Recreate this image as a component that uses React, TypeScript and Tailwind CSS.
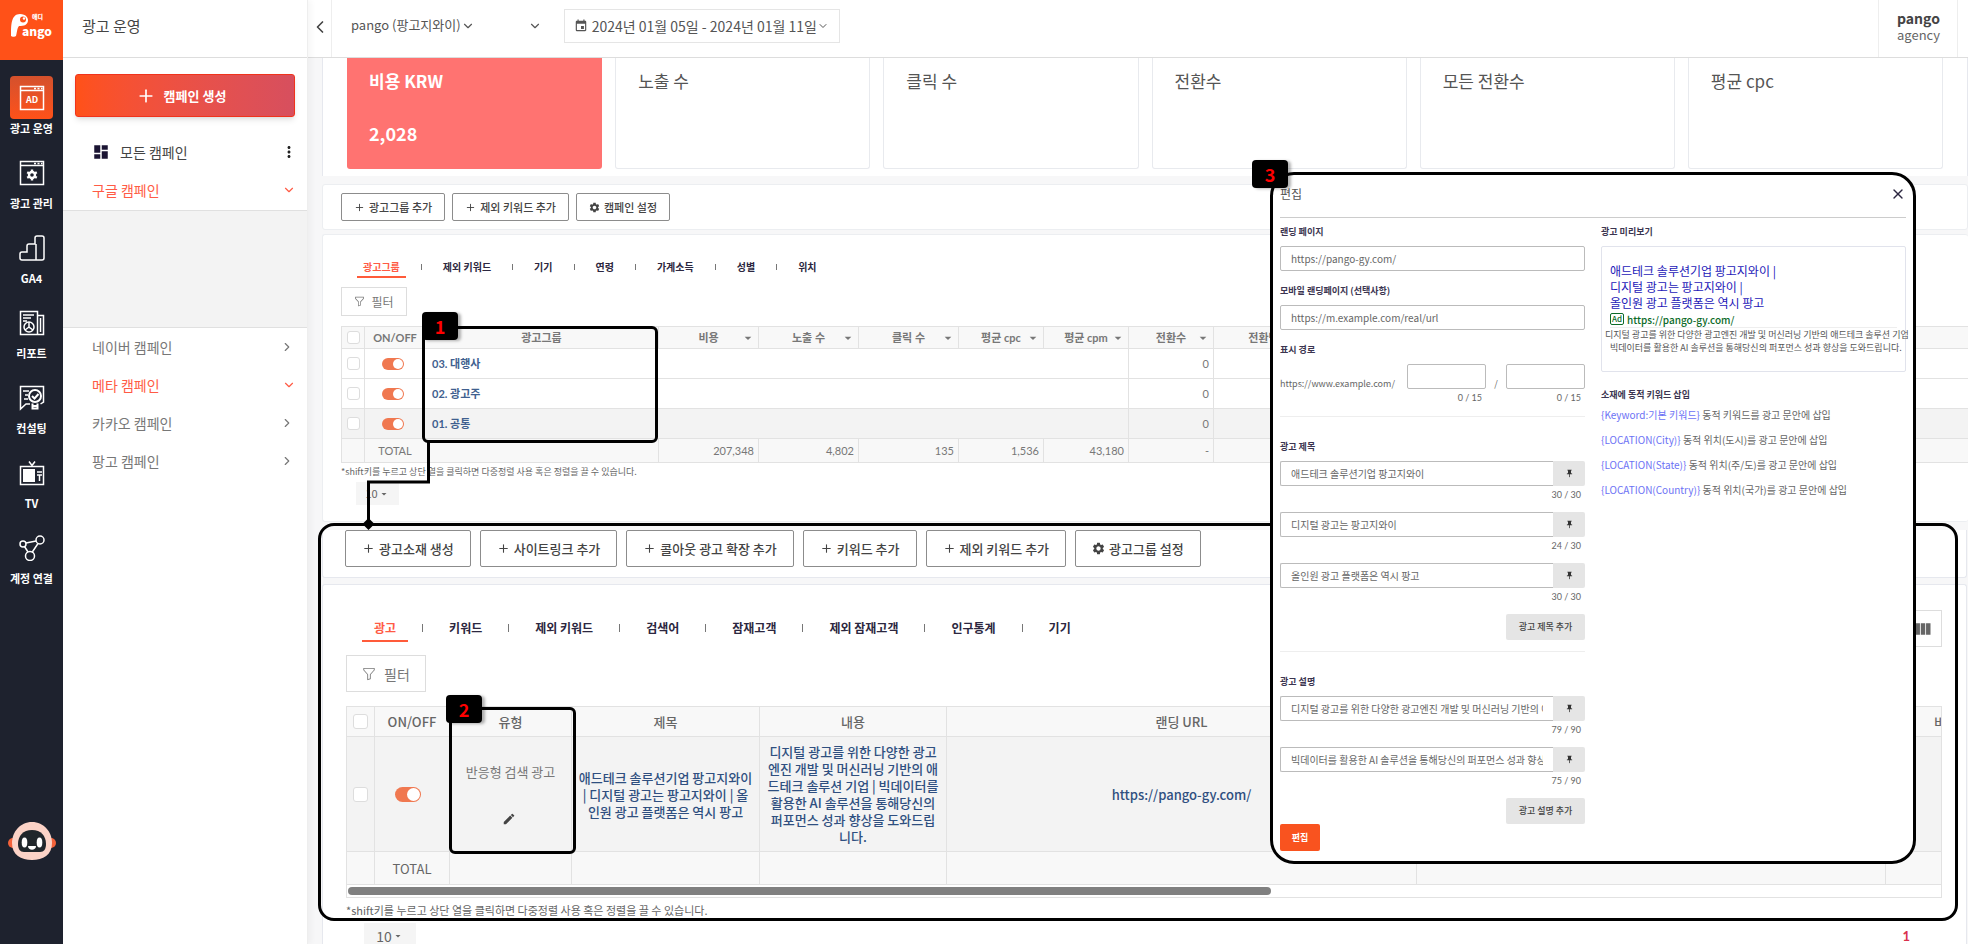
import type { ReactNode } from "react";
import clsx from "clsx";
import { ChevronDown, ChevronLeft, ChevronRight, Plus, X } from "lucide-react";
import { BsFunnel } from "react-icons/bs";
import {
  MdArrowDropDown,
  MdDashboard,
  MdEdit,
  MdEvent,
  MdMoreVert,
  MdPushPin,
  MdSettings,
  MdViewColumn,
} from "react-icons/md";

/* ---------- Rail ---------- */

function RailSvg({ children }: { children: ReactNode }) {
  return (
    <svg viewBox="0 0 26 26" className="size-[26px]" fill="none" stroke="#fff" strokeWidth="1.5">
      {children}
    </svg>
  );
}

function WindowFrame() {
  return (
    <>
      <rect x="1.5" y="1.5" width="23" height="23" />
      <path d="M1.5 5.5h23M15 3.5h2M18.5 3.5h2M22 3.5h1.5" />
    </>
  );
}

const railItems = [
  {
    label: "광고 운영",
    active: true,
    icon: (
      <RailSvg>
        <WindowFrame />
        <text x="13" y="18" textAnchor="middle" fontSize="9" fontWeight="700" fill="#fff" stroke="none">
          AD
        </text>
      </RailSvg>
    ),
  },
  {
    label: "광고 관리",
    icon: (
      <RailSvg>
        <WindowFrame />
        <circle cx="13" cy="15" r="3" strokeWidth="2.4" />
        <path
          d="M13 9.5v2M13 18.5v2M8.2 12.2l1.8 1M16 16.8l1.8 1M8.2 17.8l1.8-1M16 13.2l1.8-1"
          strokeWidth="2.4"
        />
      </RailSvg>
    ),
  },
  {
    label: "GA4",
    icon: (
      <RailSvg>
        <path d="M17 25H3a2 2 0 0 1-2-2v-4a2 2 0 0 1 2-2h5v-6a2 2 0 0 1 2-2h6V3a2 2 0 0 1 2-2h5a2 2 0 0 1 2 2v20a2 2 0 0 1-2 2h-6V9" />
      </RailSvg>
    ),
  },
  {
    label: "리포트",
    icon: (
      <RailSvg>
        <path d="M1.5 1.5h17v23h-17zM18.5 5.5h6v19h-6M21.5 8v14M4 5h11M4 8h8M4 11h4" />
        <circle cx="10" cy="17" r="5" />
        <path d="M10 12v5l4 3M10 17l-4 3" />
      </RailSvg>
    ),
  },
  {
    label: "컨설팅",
    icon: (
      <RailSvg>
        <path d="M11 19H7l-5.5 5V1.5h23V17l-3 2M4 6h6M6 10h3M5 14h4" />
        <circle cx="16" cy="11" r="6" strokeWidth="2" />
        <path d="m13 11 2.5 2.5 4-4.5M13.5 18.5v5h5v-5M13.5 21h5" strokeWidth="2" />
      </RailSvg>
    ),
  },
  {
    label: "TV",
    icon: (
      <RailSvg>
        <rect x="1.5" y="6.5" width="23" height="18" />
        <rect x="4" y="9" width="12" height="13" fill="#fff" stroke="none" />
        <path d="M18 12h5M18 15h5M20.5 15v6M10 1.5l3 4 3-4" />
      </RailSvg>
    ),
  },
  {
    label: "계정 연결",
    icon: (
      <RailSvg>
        <circle cx="4" cy="9" r="3" />
        <circle cx="21" cy="5" r="4" />
        <circle cx="11" cy="21" r="4.5" />
        <path d="m7 8 10-2M5.5 11.5l3.5 5.5M19 8.5l-6 9" />
      </RailSvg>
    ),
  },
];

function Logo() {
  return (
    <div className="flex h-[60px] items-center justify-center bg-[#ff5118] pb-2">
      <svg viewBox="0 0 44 28" className="h-7 w-11" fill="#fff" role="img" aria-label="Pango">
        {/* Elephant head with its trunk hanging down */}
        <path d="M1 24C1 13 1 2 10 2c6 0 8 4 8 6 0 5-4 6-9 6-2 2-2 7-3 10-1 1-4 1-5 0z" />
        <circle cx="13" cy="7.5" r="3" fill="#ff5118" />
        <circle cx="14" cy="6.5" r="1.2" />
        <text x="12" y="24" fontSize="12" fontWeight="900">
          ango
        </text>
        <text x="22" y="7" fontSize="6" fontWeight="900">
          애디
        </text>
      </svg>
    </div>
  );
}

function Rail() {
  return (
    <nav className="flex w-[63px] shrink-0 flex-col bg-[#1e222e]">
      <Logo />
      <ul className="mt-4">
        {railItems.map(({ label, icon, active }) => (
          <li key={label} className="h-[75px]">
            <a href="#" className="flex flex-col items-center text-[11px] leading-4 font-bold text-white">
              <span
                className={clsx(
                  "flex size-[43px] items-center justify-center rounded-sm",
                  active && "bg-linear-to-b from-[#d4512c] to-[#ff5118]",
                )}
              >
                {icon}
              </span>
              <span className="mt-px whitespace-nowrap">{label}</span>
            </a>
          </li>
        ))}
      </ul>
      <button className="mt-auto mb-[84px] self-center" aria-label="챗봇">
        <svg viewBox="0 0 48 38" className="h-[38px] w-12">
          <circle cx="5" cy="21" r="5" fill="#f4623a" />
          <circle cx="43" cy="21" r="5" fill="#f4623a" />
          <path d="M24 0c12 0 20 10 20 21 0 12-9 17-20 17S4 33 4 21C4 10 12 0 24 0z" fill="#fcd3c7" />
          <path d="M24 8c9 0 14 6 14 14 0 5-2 8-6 8H16c-4 0-6-3-6-8 0-8 5-14 14-14z" fill="#20262b" />
          <ellipse cx="16.5" cy="20.5" rx="2.8" ry="5" fill="#fff" />
          <ellipse cx="31.5" cy="20.5" rx="2.8" ry="5" fill="#fff" />
          <path d="M20 24h8c0 5-8 5-8 0z" fill="#fff" />
        </svg>
      </button>
    </nav>
  );
}

/* ---------- Campaign panel ---------- */

function CampaignLink({ label, open }: { label: string; open?: boolean }) {
  return (
    <a
      href="#"
      className={clsx(
        "flex h-[38px] items-center justify-between pr-[11px] pl-[29px] text-sm",
        open ? "text-[#ff5b45]" : "text-[#777]",
      )}
    >
      {label}
      {open ? <ChevronDown className="size-[14px]" /> : <ChevronRight className="mr-[2px] size-[14px]" />}
    </a>
  );
}

function CampaignPanel() {
  return (
    <aside className="z-10 flex w-[245px] shrink-0 flex-col border-r border-[#eee] bg-white shadow-[3px_0_6px_rgba(0,0,0,0.04)]">
      <h1 className="flex h-[58px] items-center border-b border-[#ddd] pb-1 pl-[19px] text-[15px] text-[#444]">
        광고 운영
      </h1>
      <button className="mx-3 mt-4 flex h-[43px] items-center justify-center gap-2 rounded-[3px] border border-[#f0331c] bg-linear-to-r from-[#ff5118] to-[#d74f5e] pr-2 text-[13px] font-bold text-white shadow-md">
        <Plus className="size-5" />
        캠페인 생성
      </button>
      <div className="mt-4 flex h-[38px] items-center pr-[9px] pl-[29px] text-sm text-[#444]">
        <MdDashboard className="mr-[10px] size-[18px] text-[#1b1433]" />
        <a href="#">모든 캠페인</a>
        <button className="ml-auto" aria-label="더보기">
          <MdMoreVert className="size-[18px] text-[#222]" />
        </button>
      </div>
      <CampaignLink label="구글 캠페인" open />
      <div className="mt-px h-[118px] border-y border-[#e0e0e0] bg-[#f3f3f3]" />
      <CampaignLink label="네이버 캠페인" />
      <CampaignLink label="메타 캠페인" open />
      <CampaignLink label="카카오 캠페인" />
      <CampaignLink label="팡고 캠페인" />
    </aside>
  );
}

/* ---------- Shared controls ---------- */

function Switch({ large, label }: { large?: boolean; label: string }) {
  return (
    <input
      type="checkbox"
      role="switch"
      defaultChecked
      aria-label={label}
      className={clsx(
        "mx-auto flex appearance-none items-center justify-end rounded-full bg-[#f07850] p-px before:rounded-full before:bg-white before:content-['']",
        large ? "h-[15px] w-[26px] before:size-[13px]" : "h-3 w-[22px] before:size-[10px]",
      )}
    />
  );
}

function Tick({ large, label }: { large?: boolean; label: string }) {
  return (
    <input
      type="checkbox"
      aria-label={label}
      className={clsx(
        "mx-auto block appearance-none rounded-[3px] border border-[#ddd] bg-white",
        large ? "size-[15px]" : "size-[13px]",
      )}
    />
  );
}

function ActionButton({ label, large, gear }: { label: string; large?: boolean; gear?: boolean }) {
  const Icon = gear ? MdSettings : Plus;
  return (
    <button
      className={clsx(
        "flex items-center rounded-[2px] border border-[#8c8c8c] bg-white font-medium whitespace-nowrap text-[#444]",
        large ? "h-[37px] gap-1 px-4 text-[13px]" : "h-7 gap-1 px-3 text-[11px]",
      )}
    >
      <Icon
        className={clsx(large ? "size-[13px]" : "size-[11px]", gear && "scale-110")}
        strokeWidth={gear ? 0 : 2}
      />
      {label}
    </button>
  );
}

function Tabs({ items, large }: { items: string[]; large?: boolean }) {
  return (
    <div role="tablist" className={clsx("ml-4 flex items-start", large ? "gap-[14px]" : "gap-[15px]")}>
      {items.map((item, i) => (
        <div key={item} className={clsx("flex", large ? "gap-[14px]" : "gap-[15px]")}>
          {i > 0 && <span className={clsx("w-px bg-[#777]", large ? "mt-[6px] h-2" : "mt-[7px] h-[6px]")} />}
          <button
            role="tab"
            aria-selected={i === 0}
            className={clsx(
              "border-b-2 font-bold whitespace-nowrap",
              large ? "h-6 px-3 pb-[2px] text-xs leading-5" : "h-[21px] px-[6px] text-[10px] leading-[19px]",
              i === 0 ? "border-[#ff5b3a] text-[#ff5b45]" : "border-transparent text-[#2c2740]",
            )}
          >
            {item}
          </button>
        </div>
      ))}
    </div>
  );
}

function FilterButton({ large }: { large?: boolean }) {
  return (
    <button
      className={clsx(
        "flex items-center justify-center border border-[#ddd] text-[#777]",
        large ? "mt-2 h-[37px] w-20 gap-2 text-sm" : "mt-[9px] h-[29px] w-[66px] gap-[6px] text-xs",
      )}
    >
      <BsFunnel className={large ? "size-[14px]" : "size-[11px]"} />
      필터
    </button>
  );
}

function PageSize({ large }: { large?: boolean }) {
  return (
    <label
      className={clsx(
        "flex items-center justify-center bg-[#f5f5f5] text-[#666]",
        large ? "mt-px ml-[18px] h-[26px] w-[52px] text-sm" : "mt-px ml-[15px] h-[23px] w-[43px] text-[11px]",
      )}
    >
      <select aria-label="페이지당 행 수" className="field-sizing-content appearance-none">
        <option>10</option>
      </select>
      <MdArrowDropDown className="size-3" />
    </label>
  );
}

function Badge({ n, className }: { n: number; className: string }) {
  return (
    <span
      className={clsx(
        "absolute z-10 flex h-7 w-9 items-center justify-center rounded-[4px] bg-black pb-px text-lg font-bold text-[#f00] shadow-[3px_1px_3px_rgba(0,0,0,0.3)]",
        className,
      )}
    >
      {n}
    </span>
  );
}

/* ---------- Top bar and summary ---------- */

function TopBar() {
  return (
    <header className="flex h-[58px] shrink-0 border-b border-[#ddd] bg-white text-sm text-[#555]">
      <button className="flex w-6 items-center justify-center border-r border-[#eee] pb-1" aria-label="접기">
        <ChevronLeft className="size-5 text-[#444]" />
      </button>
      <label className="ml-[19px] flex items-center pb-[6px]">
        <select aria-label="광고주" className="field-sizing-content appearance-none text-[13px]">
          <option>pango (팡고지와이)</option>
        </select>
        <ChevronDown className="size-[14px]" />
      </label>
      <label className="ml-[45px] flex items-center pb-[6px]">
        <select aria-label="계정" className="w-2 appearance-none">
          <option></option>
        </select>
        <ChevronDown className="size-[14px]" />
      </label>
      <button className="mt-[9px] ml-[22px] flex h-[34px] items-center border border-[#e5e5e5] pr-[10px] pl-[9px]">
        <MdEvent className="mr-1 size-[14px]" />
        2024년 01월 05일 - 2024년 01월 11일
        <ChevronDown className="size-3" />
      </button>
      <div className="mr-[10px] ml-auto flex w-20 flex-col border-x border-[#eee] pt-2 pl-[18px] text-[#444]">
        <strong className="text-sm leading-5">pango</strong>
        <span className="text-[13px] leading-[14px] text-[#666]">agency</span>
      </div>
    </header>
  );
}

const metrics = [
  { name: "비용 KRW", value: "2,028" },
  { name: "노출 수" },
  { name: "클릭 수" },
  { name: "전환수" },
  { name: "모든 전환수" },
  { name: "평균 cpc" },
];

function Summary() {
  return (
    <section className="grid h-[118px] shrink-0 grid-cols-6 gap-x-[13px] border-x border-[#e6e8ee] bg-white px-6 pb-[7px]">
      {metrics.map(({ name, value }) => (
        <div
          key={name}
          className={clsx(
            "rounded-b-[3px] px-[22px] pt-[11px] text-[17px] leading-6",
            value ? "bg-[#ff7371] font-bold text-white" : "border-x border-b border-[#e8eaee] text-[#555]",
          )}
        >
          <h2>{name}</h2>
          {value && <p className="mt-7 text-lg leading-6">{value}</p>}
        </div>
      ))}
    </section>
  );
}

/* ---------- Ad group table ---------- */

const groupColumns = [
  { name: "비용", total: "207,348" },
  { name: "노출 수", total: "4,802" },
  { name: "클릭 수", total: "135" },
  { name: "평균 cpc", total: "1,536" },
  { name: "평균 cpm", total: "43,180" },
  { name: "전환수", total: "-" },
  { name: "전환당 비용", total: "" },
];

const groups = ["03. 대행사", "02. 광고주", "01. 공통"];

const line = "border-r border-b border-[#e2e2e2]";

function AdGroupTable() {
  return (
    <div className="relative mt-[10px]">
      <table className="w-full table-fixed border-separate border-spacing-0 border-t border-l border-[#e2e2e2] font-['Lato','Noto_Sans_CJK_KR',sans-serif] text-[11px] leading-4 text-[#777]">
        <colgroup>
          <col className="w-[23px]" />
          <col className="w-[60px]" />
          <col className="w-[234px]" />
          <col className="w-[100px]" />
          <col className="w-[100px]" />
          <col className="w-[100px]" />
          <col className="w-[85px]" />
          <col className="w-[85px]" />
          <col className="w-[85px]" />
          <col className="w-[123px]" />
          <col />
        </colgroup>
        <thead>
          <tr className="h-[22px] bg-[#f8f8f8]">
            <th className={line}>
              <Tick label="전체 선택" />
            </th>
            <th className="border-b border-[#e2e2e2]">ON/OFF</th>
            <th className={line}>광고그룹</th>
            {groupColumns.map(({ name }) => (
              <th key={name} className={line}>
                <button className="grid w-full grid-cols-[18px_1fr_18px] items-center whitespace-nowrap">
                  <span />
                  {name}
                  <MdArrowDropDown className="size-4" />
                </button>
              </th>
            ))}
            <th className="border-b border-[#e2e2e2]" />
          </tr>
        </thead>
        <tbody>
          {groups.map((group, row) => (
            <tr key={group} className={clsx("h-[30px]", row === 2 ? "bg-[#f3f3f3]" : "bg-white")}>
              <td className={line}>
                <Tick label={`${group} 선택`} />
              </td>
              <td className="border-b border-[#e2e2e2] pr-1">
                <Switch label={group} />
              </td>
              <td className="border-b border-[#e2e2e2] pl-[7px] font-bold text-[#3f5f8f]">
                <a href="#">{group}</a>
              </td>
              {groupColumns.map(({ name }, i) => (
                <td
                  key={name}
                  className={clsx(
                    "border-b border-[#e2e2e2] text-right",
                    i > 3 && i < 6 && "border-r",
                    i === 5 && "pr-1",
                  )}
                >
                  {i === 5 && "0"}
                </td>
              ))}
              <td className="border-b border-[#e2e2e2]" />
            </tr>
          ))}
        </tbody>
        <tfoot>
          <tr className="h-6 bg-[#f8f8f8]">
            <td className={line} />
            <td className="border-b border-[#e2e2e2] text-center">TOTAL</td>
            <td className={line} />
            {groupColumns.map(({ name, total }) => (
              <td key={name} className={clsx(line, "pr-1 text-right")}>
                {total}
              </td>
            ))}
            <td className="border-b border-[#e2e2e2]" />
          </tr>
        </tfoot>
      </table>

      {/* Callout 1 and the line that leads to the ad section */}
      <div className="pointer-events-none absolute top-0 left-[81px] h-[117px] w-[236px] rounded-md border-3 border-black" />
      <Badge n={1} className="-top-[14px] left-[81px]" />
      <svg viewBox="0 0 70 90" className="pointer-events-none absolute top-[116px] left-5 z-10 h-[90px] w-[70px]">
        <path d="M67.5 0v40H7.5v41" fill="none" stroke="#000" strokeWidth="3" />
        <path d="m7.5 76 6 6-6 6-6-6z" />
      </svg>
    </div>
  );
}

function HelpText({ large }: { large?: boolean }) {
  return (
    <p className={clsx("text-[#666]", large ? "text-[11px] leading-6" : "text-[9px] leading-[18px]")}>
      *shift키를 누르고 상단 열을 클릭하면 다중정렬 사용 혹은 정렬을 끌 수 있습니다.
    </p>
  );
}

/* ---------- Ad table ---------- */

const adTitle = "애드테크 솔루션기업 팡고지와이\n| 디지털 광고는 팡고지와이 | 올\n인원 광고 플랫폼은 역시 팡고";
const adBody =
  "디지털 광고를 위한 다양한 광고\n엔진 개발 및 머신러닝 기반의 애\n드테크 솔루션 기업 | 빅데이터를\n활용한 AI 솔루션을 통해당신의\n퍼포먼스 성과 향상을 도와드립\n니다.";

function AdTable() {
  return (
    <div className="relative mt-[14px]">
      <div className="overflow-hidden border border-[#e2e2e2]">
        <table className="w-[1660px] table-fixed border-separate border-spacing-0 text-center text-[13px] leading-[17px] text-[#666]">
          <colgroup>
            <col className="w-7" />
            <col className="w-[75px]" />
            <col className="w-[122px]" />
            <col className="w-[188px]" />
            <col className="w-[187px]" />
            <col className="w-[470px]" />
            <col className="w-[469px]" />
            <col className="w-[121px]" />
          </colgroup>
          <thead>
            <tr className="h-[30px] bg-[#f8f8f8]">
              <th className={line}>
                <Tick large label="전체 선택" />
              </th>
              {["ON/OFF", "유형", "제목", "내용", "랜딩 URL", "", "비용"].map((name) => (
                <th key={name} className={clsx(line, "font-medium")}>
                  {name}
                </th>
              ))}
            </tr>
          </thead>
          <tbody>
            <tr className="h-[115px] bg-[#f3f3f3]">
              <td className={line}>
                <Tick large label="광고 선택" />
              </td>
              <td className={clsx(line, "pr-2")}>
                <Switch large label="광고" />
              </td>
              <td className={clsx(line, "text-[#777]")}>
                <p>반응형 검색 광고</p>
                <button className="mt-8 mr-1 align-top" aria-label="수정">
                  <MdEdit className="size-[14px] text-[#444]" />
                </button>
              </td>
              <td className={clsx(line, "font-medium whitespace-pre text-[#2f4f80]")}>{adTitle}</td>
              <td className={clsx(line, "font-medium whitespace-pre text-[#2f4f80]")}>{adBody}</td>
              <td className={clsx(line, "font-medium text-[#2f4f80]")}>
                <a href="#">https://pango-gy.com/</a>
              </td>
              <td className={line} />
              <td className={line} />
            </tr>
          </tbody>
          <tfoot>
            <tr className="h-[33px] bg-[#f8f8f8]">
              <td className={line} />
              <td className={line}>TOTAL</td>
              <td className={line} />
              <td className={line} />
              <td className={line} />
              <td className={line} />
              <td className={line} />
              <td className={line} />
            </tr>
          </tfoot>
        </table>
        <div className="px-px py-[2px]">
          <div className="h-2 w-[58%] rounded-full bg-[#808080]" />
        </div>
      </div>

      {/* Callout 2 */}
      <div className="pointer-events-none absolute top-px left-[103px] h-[147px] w-[127px] rounded-md border-3 border-black" />
      <Badge n={2} className="-top-[11px] left-[100px]" />
    </div>
  );
}

/* ---------- Edit dialog ---------- */

const input =
  "h-[25px] w-full min-w-0 rounded-[2px] border border-[#bbb] bg-white px-[10px] text-[10px] text-[#666] outline-none";

function Counter({ children }: { children: ReactNode }) {
  return <p className="mt-px pr-1 text-right font-['Lato',sans-serif] leading-4 text-[#666]">{children}</p>;
}

function PinnedField({ label, value, count }: { label: string; value: string; count: string }) {
  return (
    <div className="mb-[9px]">
      <div className="flex">
        <input aria-label={label} className={clsx(input, "rounded-r-none border-r-0")} defaultValue={value} />
        <button
          type="button"
          className="flex w-8 shrink-0 items-center justify-center rounded-r-[2px] bg-[#e5e5e5]"
          aria-label="고정"
        >
          <MdPushPin className="size-[9px] text-[#333]" />
        </button>
      </div>
      <Counter>{count}</Counter>
    </div>
  );
}

const fieldLabel = "mb-[6px] block leading-4 font-bold text-[#3b3550]";
const addButton = "ml-auto block h-[26px] w-[79px] rounded-[2px] bg-[#e5e5e5] font-medium text-[#444]";

const dynamicKeywords = [
  ["{Keyword:기본 키워드}", "동적 키워드를 광고 문안에 삽입"],
  ["{LOCATION(City)}", "동적 위치(도시)를 광고 문안에 삽입"],
  ["{LOCATION(State)}", "동적 위치(주/도)를 광고 문안에 삽입"],
  ["{LOCATION(Country)}", "동적 위치(국가)를 광고 문안에 삽입"],
];

function EditDialog() {
  return (
    <div className="absolute top-[172px] right-[52px] z-20">
      <Badge n={3} className="-top-3 -left-[18px]" />
      <form
        role="dialog"
        aria-label="편집"
        className="w-[646px] rounded-[24px] border-3 border-black bg-white px-[7px] pb-[10px] text-[9px]"
        onSubmit={(e) => e.preventDefault()}
      >
        <div className="flex h-[43px] items-center justify-between border-b border-[#ccc] pb-1 text-xs text-[#555]">
          <h2>편집</h2>
          <button type="button" aria-label="닫기">
            <X className="size-4 text-[#2c2740]" />
          </button>
        </div>

        <div className="grid grid-cols-2 gap-4 pt-[6px]">
          <div>
            <label className={fieldLabel} htmlFor="landing">
              랜딩 페이지
            </label>
            <input id="landing" className={input} defaultValue="https://pango-gy.com/" />
            <label className={clsx(fieldLabel, "mt-3")} htmlFor="mobile">
              모바일 랜딩페이지 (선택사항)
            </label>
            <input id="mobile" className={input} defaultValue="https://m.example.com/real/url" />
            <label className={clsx(fieldLabel, "mt-3")} htmlFor="path">
              표시 경로
            </label>
            <div className="grid grid-cols-[1fr_79px_20px_79px] text-[#666]">
              <span className="pt-3 leading-4">https://www.example.com/</span>
              <div>
                <input id="path" className={input} />
                <Counter>0 / 15</Counter>
              </div>
              <span className="pt-3 text-center leading-4">/</span>
              <div>
                <input aria-label="표시 경로 2" className={input} />
                <Counter>0 / 15</Counter>
              </div>
            </div>

            <h3 className={clsx(fieldLabel, "mt-[10px] border-t border-[#eee] pt-[22px]")}>광고 제목</h3>
            <PinnedField label="광고 제목 1" value="애드테크 솔루션기업 팡고지와이" count="30 / 30" />
            <PinnedField label="광고 제목 2" value="디지털 광고는 팡고지와이" count="24 / 30" />
            <PinnedField label="광고 제목 3" value="올인원 광고 플랫폼은 역시 팡고" count="30 / 30" />
            <button type="button" className={addButton}>
              광고 제목 추가
            </button>

            <h3 className={clsx(fieldLabel, "mt-[11px] border-t border-[#eee] pt-[22px]")}>광고 설명</h3>
            <PinnedField
              label="광고 설명 1"
              value="디지털 광고를 위한 다양한 광고엔진 개발 및 머신러닝 기반의 애드테크 솔루션 기업"
              count="79 / 90"
            />
            <PinnedField
              label="광고 설명 2"
              value="빅데이터를 활용한 AI 솔루션을 통해당신의 퍼포먼스 성과 향상을 도와드립니다."
              count="75 / 90"
            />
            <button type="button" className={addButton}>
              광고 설명 추가
            </button>
          </div>

          <div>
            <h3 className={fieldLabel}>광고 미리보기</h3>
            <div className="h-[126px] rounded-[2px] border border-[#e1e3ec] pt-4">
              <p className="px-2 text-xs leading-4 text-[#2418b8]">
                애드테크 솔루션기업 팡고지와이 |
                <br />
                디지털 광고는 팡고지와이 |
                <br />
                올인원 광고 플랫폼은 역시 팡고
              </p>
              <p className="mx-2 flex h-[17px] items-center gap-[3px] border-b border-[#eee] text-[10px] font-medium text-[#0c6b28]">
                <span className="rounded-[2px] border border-[#0c6b28] px-px text-[8px] leading-[10px]">Ad</span>
                <a href="#">https://pango-gy.com/</a>
              </p>
              <p className="px-[3px] leading-[13px] whitespace-nowrap text-[#555]">
                디지털 광고를 위한 다양한 광고엔진 개발 및 머신러닝 기반의 애드테크 솔루션 기업
              </p>
              <p className="px-2 leading-[13px] whitespace-nowrap text-[#555]">
                빅데이터를 활용한 AI 솔루션을 통해당신의 퍼포먼스 성과 향상을 도와드립니다.
              </p>
            </div>
            <h3 className="mt-[15px] leading-4 font-bold text-[#3b3550]">소재에 동적 키워드 삽입</h3>
            <ul className="text-[10px] text-[#666]">
              {dynamicKeywords.map(([token, text]) => (
                <li key={token} className="h-[25px] leading-6">
                  <span className="text-[#6c72f5]">{token}</span> {text}
                </li>
              ))}
            </ul>
          </div>
        </div>
        <button className="block h-[27px] w-10 rounded-[2px] bg-[#f9531f] font-bold text-white">편집</button>
      </form>
    </div>
  );
}

/* ---------- Page ---------- */

export default function App() {
  return (
    <div className="relative flex h-screen overflow-hidden bg-white font-['Noto_Sans_CJK_KR',sans-serif]">
      <Rail />
      <CampaignPanel />
      <div className="flex min-w-0 flex-1 flex-col">
        <TopBar />
        <main className="flex min-h-0 flex-1 flex-col bg-[#f7f7f8] pl-[14px]">
          <Summary />

          <section className="mt-2 flex shrink-0 gap-[7px] rounded-[3px] border border-[#eceef1] bg-white px-[18px] py-2">
            <ActionButton label="광고그룹 추가" />
            <ActionButton label="제외 키워드 추가" />
            <ActionButton label="캠페인 설정" gear />
          </section>

          <section className="mt-1 shrink-0 rounded-[3px] border-y border-l border-[#eceef1] bg-white pt-[22px] pb-4 pl-[18px]">
            <Tabs items={["광고그룹", "제외 키워드", "기기", "연령", "가계소득", "성별", "위치"]} />
            <FilterButton />
            <AdGroupTable />
            <HelpText />
            <PageSize />
          </section>

          <div className="relative mt-2 flex flex-1 flex-col pr-px">
            <section className="flex shrink-0 gap-[9px] rounded-b-[3px] border-x border-b border-[#e6e8ee] bg-white px-[22px] pb-[10px]">
              <ActionButton large label="광고소재 생성" />
              <ActionButton large label="사이트링크 추가" />
              <ActionButton large label="콜아웃 광고 확장 추가" />
              <ActionButton large label="키워드 추가" />
              <ActionButton large label="제외 키워드 추가" />
              <ActionButton large label="광고그룹 설정" gear />
            </section>

            <section className="mt-[6px] flex-1 rounded-t-[3px] border-x border-t border-[#e6e8ee] bg-white pt-[25px] pr-6 pl-[23px]">
              <div className="flex h-[37px] justify-between">
                <div className="mt-2">
                  <Tabs
                    large
                    items={["광고", "키워드", "제외 키워드", "검색어", "잠재고객", "제외 잠재고객", "인구통계", "기기"]}
                  />
                </div>
                <button className="w-[46px] border border-[#ddd] pl-4 text-[#666]" aria-label="열 설정">
                  <MdViewColumn className="size-5" />
                </button>
              </div>
              <FilterButton large />
              <AdTable />
              <HelpText large />
              <div className="flex justify-between">
                <PageSize large />
                <a
                  href="#"
                  className="mr-8 pt-1 font-['Lato',sans-serif] text-[13px] leading-5 font-bold text-[#d9304c]"
                >
                  1
                </a>
              </div>
            </section>

            {/* Outline around the ad section */}
            <div className="pointer-events-none absolute -top-[7px] right-[10px] -left-1 h-[398px] rounded-[16px] border-3 border-black" />
          </div>
        </main>
      </div>
      <EditDialog />
    </div>
  );
}
